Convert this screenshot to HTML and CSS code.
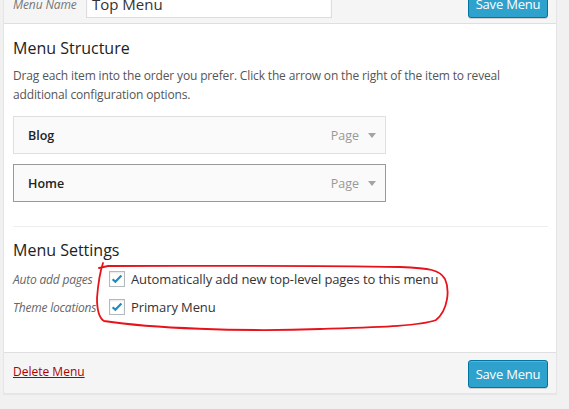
FILE: index.html
```html
<!DOCTYPE html>
<html>
<head>
<meta charset="utf-8">
<link rel="stylesheet" href="styles.css">
</head>
<body>
<div class="panel">
  <div class="header">
    <label class="name-label">Menu Name</label>
    <div class="name-input">Top Menu</div>
    <span class="spacer"></span>
    <button class="btn">Save Menu</button>
  </div>
  <div class="body">
    <h3 class="title">Menu Structure</h3>
    <p class="desc">Drag each item into the order you prefer. Click the arrow on the right of the item to reveal additional configuration options.</p>
    <ul class="items">
      <li class="item"><span class="item-title">Blog</span><span class="item-type">Page</span><span class="arrow"></span></li>
      <li class="item item-active"><span class="item-title">Home</span><span class="item-type">Page</span><span class="arrow"></span></li>
    </ul>
    <div class="divider"></div>
    <h3 class="title settings-title">Menu Settings</h3>
    <div class="row">
      <span class="row-label">Auto add pages</span>
      <span class="check"><svg viewBox="0 0 16 16" width="16" height="16"><path d="M3.6 8.2 L6.4 10.8 L12.4 4.6" fill="none" stroke="#1e8cbe" stroke-width="2.2"/></svg></span>
      <span class="row-text">Automatically add new top-level pages to this menu</span>
    </div>
    <div class="row">
      <span class="row-label">Theme locations</span>
      <span class="check"><svg viewBox="0 0 16 16" width="16" height="16"><path d="M3.6 8.2 L6.4 10.8 L12.4 4.6" fill="none" stroke="#1e8cbe" stroke-width="2.2"/></svg></span>
      <span class="row-text">Primary Menu</span>
    </div>
  </div>
  <div class="footer">
    <a class="delete" href="#">Delete Menu</a>
    <span class="spacer"></span>
    <button class="btn">Save Menu</button>
  </div>
</div>
<svg class="annot" width="569" height="409" viewBox="0 0 569 409">
  <path d="M103 263 C 100 272, 98 285, 97 298 C 97 310, 99 318, 104 321 C 150 328, 240 332, 320 329 C 380 327, 420 326, 436 320 C 448 310, 450 290, 445 279 C 440 270, 430 268, 400 267 C 300 265, 200 266, 108 266 L 99 268" fill="none" stroke="#e8121a" stroke-width="1.8" stroke-linecap="round"/>
</svg>
</body>
</html>
```
FILE: styles.css
```css
html, body {
  margin: 0;
  padding: 0;
}
body {
  background: #f1f1f1;
  font-family: "Open Sans", "Noto Sans", sans-serif;
  font-size: 13px;
  color: #444;
  width: 569px;
  height: 409px;
  overflow: hidden;
  position: relative;
}
.panel {
  margin: -21px 0 0 3px;
  width: 552px;
  border: 1px solid #e5e5e5;
  background: #fff;
  box-shadow: 0 1px 1px rgba(0,0,0,0.04);
}
.header {
  display: flex;
  align-items: center;
  background: #f5f5f5;
  border-bottom: 1px solid #dfdfdf;
  padding: 10px 8px 5px 9px;
}
.spacer { flex: 1; }
.name-label {
  font-style: italic;
  color: #777;
  font-size: 12px;
  letter-spacing: -0.1px;
  width: 73px;
}
.name-input {
  width: 234px;
  height: 26px;
  line-height: 26px;
  border: 1px solid #ddd;
  background: #fff;
  padding: 0 5px;
  font-size: 15px;
  color: #333;
  box-shadow: inset 0 1px 2px rgba(0,0,0,0.07);
}
.btn {
  height: 28px;
  width: 80px;
  background: #2ea2cc;
  border: 1px solid #0074a2;
  border-radius: 3px;
  color: #fff;
  font-family: "Open Sans", "Noto Sans", sans-serif;
  font-size: 13px;
  letter-spacing: -0.2px;
  padding: 0;
  box-shadow: inset 0 1px 0 rgba(120,200,230,0.5), 0 1px 0 rgba(0,0,0,0.15);
}
.body {
  padding: 0 8px 31px 9px;
}
.title {
  margin: 12px 0 0;
  font-size: 16px;
  line-height: 24px;
  font-weight: 400;
  color: #222;
}
.desc {
  margin: 6px 0 0;
  font-size: 12px;
  letter-spacing: -0.15px;
  line-height: 19px;
  color: #555;
}
.items {
  list-style: none;
  margin: 12px 0 0;
  padding: 0;
  display: flex;
  flex-direction: column;
  gap: 10px;
}
.item {
  height: 36px;
  display: flex;
  align-items: center;
  background: #fafafa;
  border: 1px solid #dfdfdf;
  padding: 0 9px 0 14px;
  box-sizing: content-box;
  width: 348px;
}
.item-active {
  border-color: #999;
}
.item-title {
  flex: 1;
  font-size: 12.5px;
  font-weight: 600;
  color: #222;
}
.item-type {
  color: #999;
  font-size: 12.5px;
  margin-right: 9px;
}
.arrow {
  width: 0;
  height: 0;
  border-left: 4px solid transparent;
  border-right: 4px solid transparent;
  border-top: 5px solid #a0a5aa;
}
.divider {
  margin-top: 24px;
  border-top: 1px solid #eee;
}
.settings-title {
  margin-top: 11px;
}
.settings-title + .row { margin-top: 3px; }
.row {
  display: flex;
  align-items: center;
  height: 28px;
}
.row-label {
  width: 96px;
  font-style: italic;
  font-size: 12px;
  letter-spacing: -0.2px;
  color: #666;
  white-space: nowrap;
}
.check {
  width: 14px;
  height: 14px;
  border: 1px solid #b4b9be;
  background: #fff;
  box-shadow: inset 0 1px 2px rgba(0,0,0,0.1);
  display: flex;
  align-items: center;
  justify-content: center;
  margin-right: 6px;
}
.check svg { flex: none; }
.row-text {
  color: #333;
  letter-spacing: -0.1px;
}
.footer {
  display: flex;
  align-items: center;
  background: #f5f5f5;
  border-top: 1px solid #dfdfdf;
  padding: 7px 8px 5px 9px;
}
.delete {
  color: #a00;
  text-decoration: underline;
  font-size: 12px;
  margin-bottom: 6px;
}
.annot {
  position: absolute;
  left: 0;
  top: 0;
  pointer-events: none;
}
```
